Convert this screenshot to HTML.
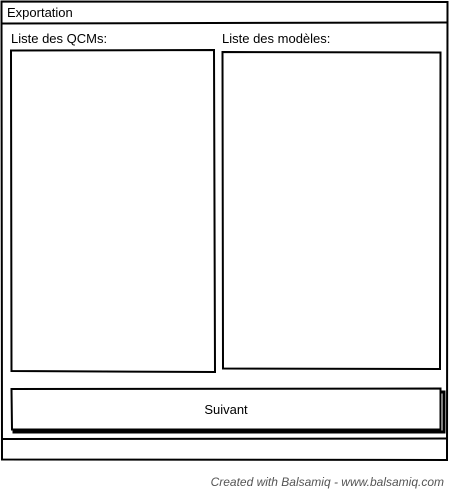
<!DOCTYPE html>
<html><head><meta charset="utf-8"><style>
html,body{margin:0;padding:0;background:#fff;width:450px;height:492px;overflow:hidden}
svg{display:block}
text{font-family:"Liberation Sans",sans-serif;fill:#000}
</style></head><body>
<svg width="450" height="492" viewBox="0 0 450 492" xmlns="http://www.w3.org/2000/svg">
<g fill="none" stroke="#000" stroke-width="2">
<path d="M1.5 1.5 L447.5 2 L447 460 L2 459.5 Z"/>
<path d="M1.5 23.5 L447.5 22.5"/>
<path d="M11 50.5 L214 50 L215 372 L11.5 371 Z"/>
<path d="M222.5 52 L440.5 52.5 L440 369 L223 368.5 Z"/>
<path d="M2 439 L447 438.5"/>
</g>
<path d="M14 428 L14 432 L444 432 L444 392 L440 392" fill="none" stroke="#000" stroke-width="3"/>
<path d="M11.5 389 L440.5 388.5 L440.5 429.5 L12 429.5 Z" fill="#fff" stroke="#000" stroke-width="2"/>
<text x="7" y="17" font-size="13">Exportation</text>
<text x="11" y="43" font-size="13">Liste des QCMs:</text>
<text x="222" y="43" font-size="13">Liste des modèles:</text>
<text x="226" y="414" font-size="13" text-anchor="middle">Suivant</text>
<text x="444" y="486" font-size="12" font-style="italic" text-anchor="end" style="fill:#555">Created with Balsamiq - www.balsamiq.com</text>
</svg>
</body></html>
